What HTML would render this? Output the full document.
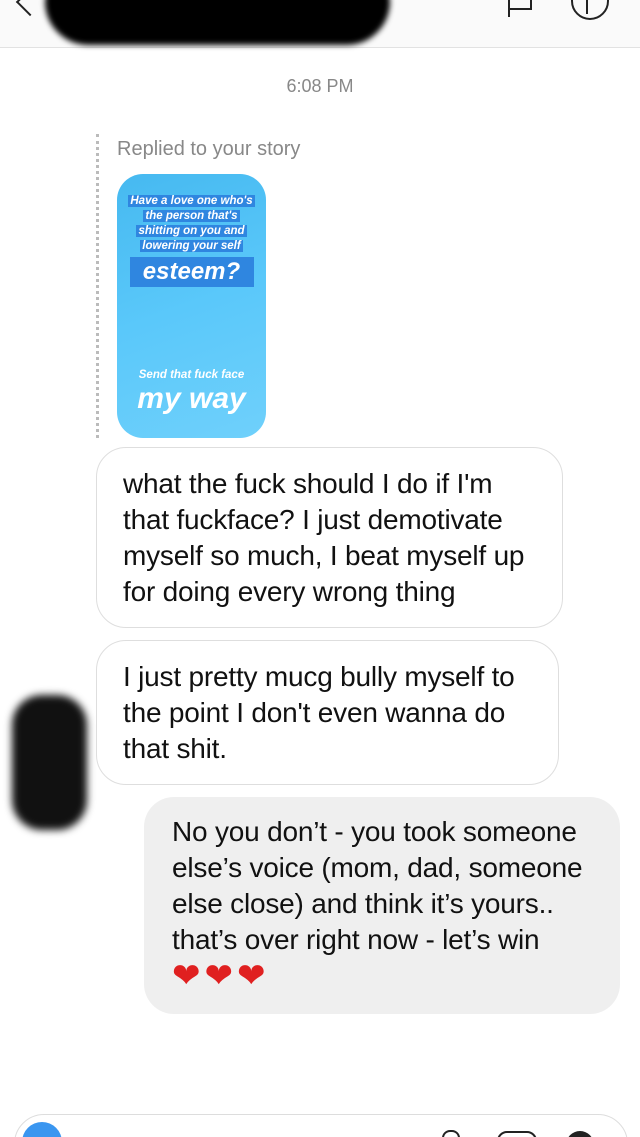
<!DOCTYPE html>
<html style="overflow:hidden;height:1137px"><head><style>
body{margin:0;width:640px;height:1137px;background:#fff;position:relative;overflow:hidden;font-family:"Liberation Sans",sans-serif;}
.a{position:absolute}
.bub{position:absolute;border:1.5px solid #dedede;border-radius:30px;background:#fff;font-size:28px;line-height:36px;color:#111;padding:0 0 0 26px;box-sizing:border-box;white-space:nowrap;letter-spacing:-0.2px}
</style></head><body>
<div class="a" style="left:0;top:0;width:640px;height:47px;background:#fafafa;border-bottom:1px solid #e2e2e2"></div>
<div class="a" style="left:20px;top:-8px;width:18px;height:18px;border-left:2px solid #222;border-bottom:2px solid #222;transform:rotate(45deg)"></div>
<div class="a" style="left:45px;top:-20px;width:345px;height:65px;background:#000;border-radius:30px 30px 60px 60px;filter:blur(3px)"></div>
<div class="a" style="left:508px;top:-5px;width:2px;height:22px;background:#222"></div>
<div class="a" style="left:508px;top:0;width:22px;height:8px;border:2px solid #222;border-left:none;border-top:none"></div>
<div class="a" style="left:571px;top:-18px;width:34px;height:34px;border:2px solid #222;border-radius:50%"></div>
<div class="a" style="left:586px;top:0;width:2px;height:14px;background:#222"></div>
<div class="a" style="left:0;top:76px;width:640px;text-align:center;font-size:18px;color:#888">6:08 PM</div>
<div class="a" style="left:96px;top:134px;height:304px;border-left:3px dotted #bbb"></div>
<div class="a" style="left:117px;top:138px;font-size:20px;color:#888">Replied to your story</div>
<div class="a" style="left:117px;top:174px;width:149px;height:264px;border-radius:26px;background:linear-gradient(160deg,#46b9f0,#5ac8fa 50%,#6fd0fb);color:#fff;font-weight:bold;font-style:italic;text-align:center;white-space:nowrap">
<div style="margin-top:20px;font-size:11.5px;line-height:15px"><span style="background:#2f86e0;padding:0 2px">Have a love one who's</span><br><span style="background:#2f86e0;padding:0 2px">the person that's</span><br><span style="background:#2f86e0;padding:0 2px">shitting on you and</span><br><span style="background:#2f86e0;padding:0 2px">lowering your self</span></div>
<div style="margin:3px auto 0;width:124px;background:#2f86e0;font-size:24px;line-height:30px">esteem?</div>
<div style="margin-top:82px;font-size:11.5px">Send that fuck face</div>
<div style="font-size:30px;line-height:36px">my way</div>
</div>
<div class="bub" style="left:96px;top:447px;width:467px;height:181px;padding-top:18px">what the fuck should I do if I'm<br>that fuckface? I just demotivate<br>myself so much, I beat myself up<br>for doing every wrong thing</div>
<div class="bub" style="left:96px;top:640px;width:463px;height:145px;padding-top:18px">I just pretty mucg bully myself to<br>the point I don't even wanna do<br>that shit.</div>
<div class="a" style="left:12px;top:695px;width:75px;height:135px;background:#111;border-radius:30px;filter:blur(4px)"></div>
<div class="a" style="left:144px;top:797px;width:476px;height:217px;background:#efefef;border-radius:30px;box-sizing:border-box;padding:17px 0 0 28px;font-size:28px;line-height:36px;color:#111;white-space:nowrap;letter-spacing:-0.2px">No you don’t - you took someone<br>else’s voice (mom, dad, someone<br>else close) and think it’s yours..<br>that’s over right now - let’s win<br><span style="color:#e02020;font-size:34px;letter-spacing:4px">❤❤❤</span></div>
<div class="a" style="left:14px;top:1114px;width:612px;height:60px;border:1.5px solid #ddd;border-radius:30px"></div>
<div class="a" style="left:22px;top:1122px;width:40px;height:40px;border-radius:50%;background:#3a96f0"></div>
<div class="a" style="left:442px;top:1130px;width:14px;height:20px;border:2px solid #222;border-radius:8px"></div>
<div class="a" style="left:497px;top:1131px;width:36px;height:20px;border:2px solid #222;border-radius:10px"></div>
<div class="a" style="left:566px;top:1131px;width:28px;height:28px;border-radius:50%;background:#222"></div>
</body></html>
